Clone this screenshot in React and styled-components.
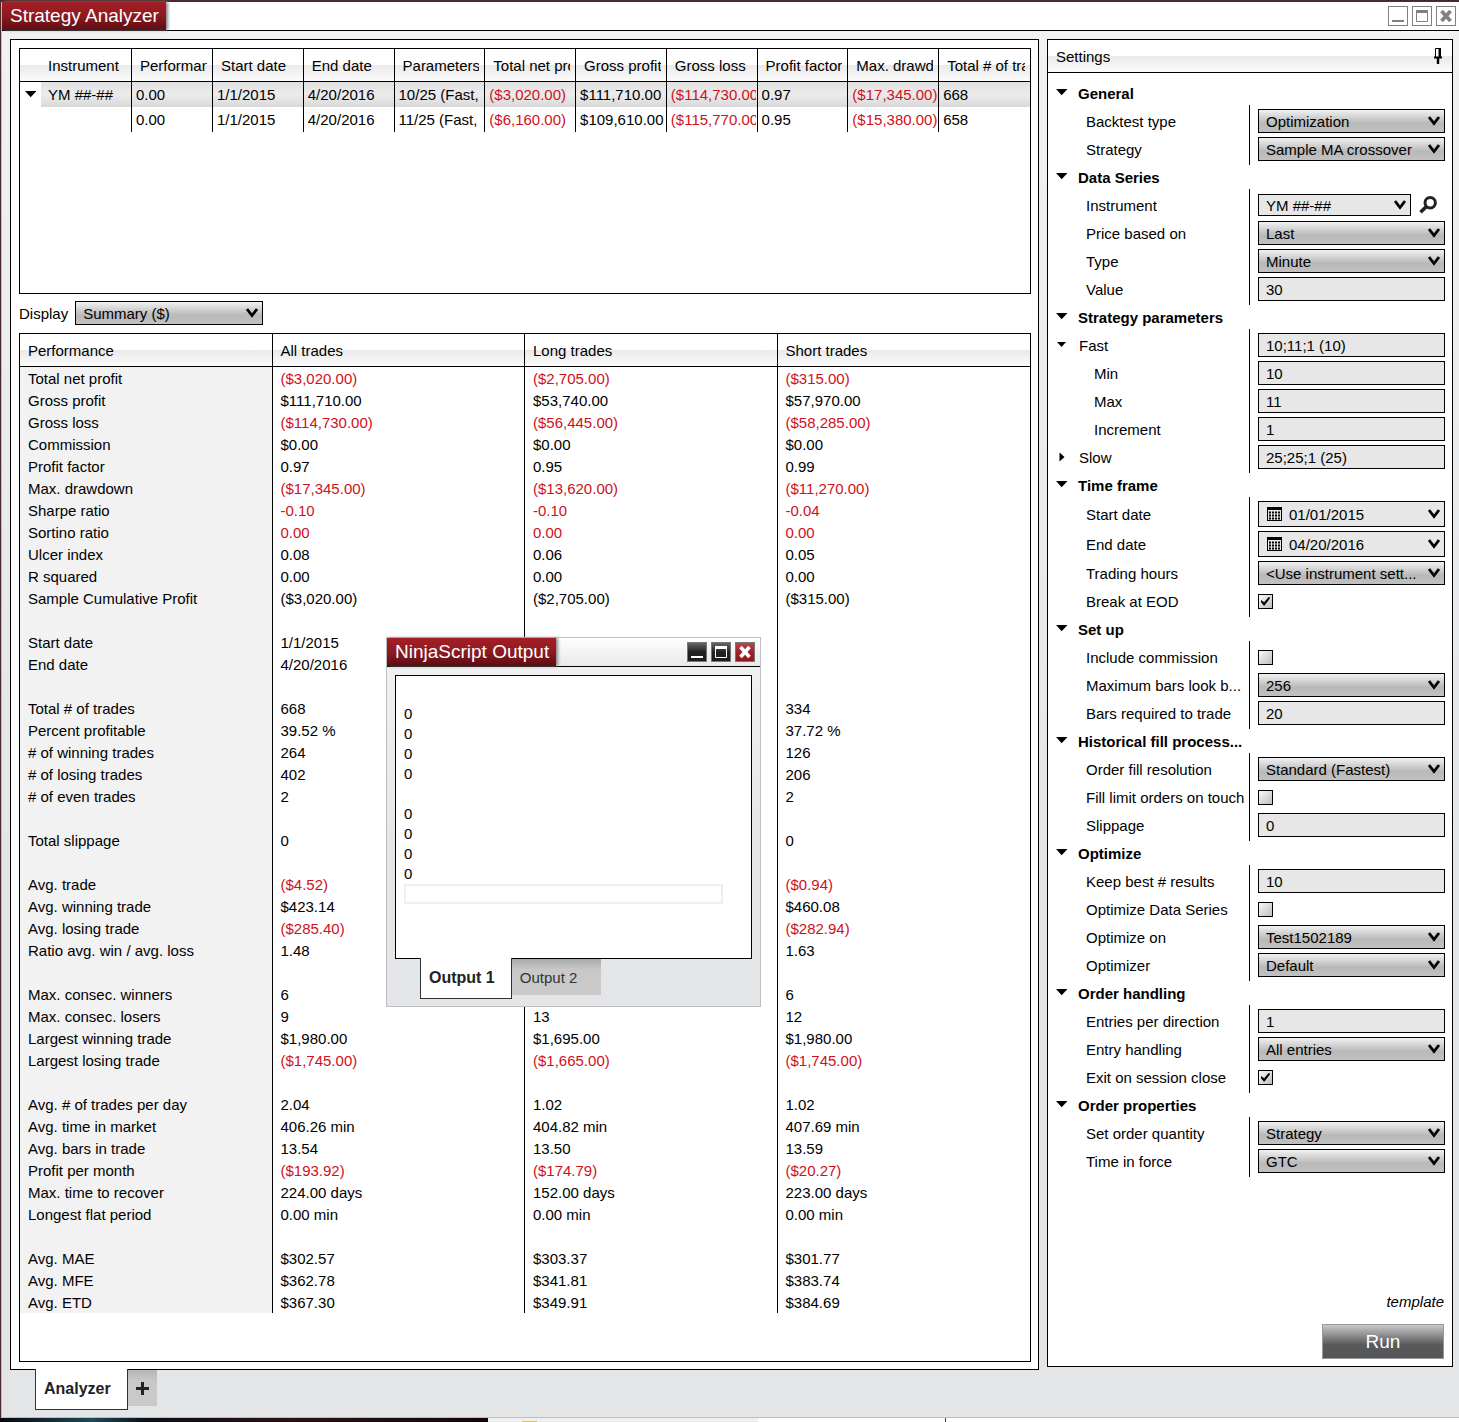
import React, { useId } from "react";
import styled, { createGlobalStyle, css } from "styled-components";

const Theme = {
  line: "#000",
  loss: "#d0101a",
  field: "#e7e7e7",
  header: "linear-gradient(#fff 50%, #e9e9eb 50%, #fbfbfb)",
  brand: "linear-gradient(#a61e26, #8c1a21 50%, #5c0d13)",
  button: "linear-gradient(#f1f1f1, #b9b9b9 60%, #c1c1c1)",
};

const runColumns = [
  "Instrument",
  "Performance",
  "Start date",
  "End date",
  "Parameters",
  "Total net profit",
  "Gross profit",
  "Gross loss",
  "Profit factor",
  "Max. drawdown",
  "Total # of trades",
];

const runs = [
  ["YM ##-##", "0.00", "1/1/2015", "4/20/2016", "10/25 (Fast,", "($3,020.00)", "$111,710.00", "($114,730.00)", "0.97", "($17,345.00)", "668"],
  ["", "0.00", "1/1/2015", "4/20/2016", "11/25 (Fast,", "($6,160.00)", "$109,610.00", "($115,770.00)", "0.95", "($15,380.00)", "658"],
];

const performance = [
  ["Total net profit", "($3,020.00)", "($2,705.00)", "($315.00)"],
  ["Gross profit", "$111,710.00", "$53,740.00", "$57,970.00"],
  ["Gross loss", "($114,730.00)", "($56,445.00)", "($58,285.00)"],
  ["Commission", "$0.00", "$0.00", "$0.00"],
  ["Profit factor", "0.97", "0.95", "0.99"],
  ["Max. drawdown", "($17,345.00)", "($13,620.00)", "($11,270.00)"],
  ["Sharpe ratio", "-0.10", "-0.10", "-0.04"],
  ["Sortino ratio", "0.00", "0.00", "0.00", "red"],
  ["Ulcer index", "0.08", "0.06", "0.05"],
  ["R squared", "0.00", "0.00", "0.00"],
  ["Sample Cumulative Profit", "($3,020.00)", "($2,705.00)", "($315.00)", "black"],
  [],
  ["Start date", "1/1/2015", "", ""],
  ["End date", "4/20/2016", "", ""],
  [],
  ["Total # of trades", "668", "", "334"],
  ["Percent profitable", "39.52 %", "", "37.72 %"],
  ["# of winning trades", "264", "", "126"],
  ["# of losing trades", "402", "", "206"],
  ["# of even trades", "2", "", "2"],
  [],
  ["Total slippage", "0", "", "0"],
  [],
  ["Avg. trade", "($4.52)", "", "($0.94)"],
  ["Avg. winning trade", "$423.14", "", "$460.08"],
  ["Avg. losing trade", "($285.40)", "", "($282.94)"],
  ["Ratio avg. win / avg. loss", "1.48", "", "1.63"],
  [],
  ["Max. consec. winners", "6", "", "6"],
  ["Max. consec. losers", "9", "13", "12"],
  ["Largest winning trade", "$1,980.00", "$1,695.00", "$1,980.00"],
  ["Largest losing trade", "($1,745.00)", "($1,665.00)", "($1,745.00)"],
  [],
  ["Avg. # of trades per day", "2.04", "1.02", "1.02"],
  ["Avg. time in market", "406.26 min", "404.82 min", "407.69 min"],
  ["Avg. bars in trade", "13.54", "13.50", "13.59"],
  ["Profit per month", "($193.92)", "($174.79)", "($20.27)"],
  ["Max. time to recover", "224.00 days", "152.00 days", "223.00 days"],
  ["Longest flat period", "0.00 min", "0.00 min", "0.00 min"],
  [],
  ["Avg. MAE", "$302.57", "$303.37", "$301.77"],
  ["Avg. MFE", "$362.78", "$341.81", "$383.74"],
  ["Avg. ETD", "$367.30", "$349.91", "$384.69"],
];

const settings = [
  {
    title: "General",
    rows: [
      { label: "Backtest type", kind: "select", value: "Optimization" },
      { label: "Strategy", kind: "select", value: "Sample MA crossover" },
    ],
  },
  {
    title: "Data Series",
    rows: [
      { label: "Instrument", kind: "instrument", value: "YM ##-##" },
      { label: "Price based on", kind: "select", value: "Last" },
      { label: "Type", kind: "select", value: "Minute" },
      { label: "Value", kind: "text", value: "30" },
    ],
  },
  {
    title: "Strategy parameters",
    rows: [
      { label: "Fast", kind: "text", value: "10;11;1 (10)", toggle: "open" },
      { label: "Min", kind: "text", value: "10", nested: true },
      { label: "Max", kind: "text", value: "11", nested: true },
      { label: "Increment", kind: "text", value: "1", nested: true },
      { label: "Slow", kind: "text", value: "25;25;1 (25)", toggle: "closed" },
    ],
  },
  {
    title: "Time frame",
    rows: [
      { label: "Start date", kind: "date", value: "01/01/2015" },
      { label: "End date", kind: "date", value: "04/20/2016" },
      { label: "Trading hours", kind: "select", value: "<Use instrument sett..." },
      { label: "Break at EOD", kind: "check", value: true },
    ],
  },
  {
    title: "Set up",
    rows: [
      { label: "Include commission", kind: "check", value: false },
      { label: "Maximum bars look b...", kind: "select", value: "256" },
      { label: "Bars required to trade", kind: "text", value: "20" },
    ],
  },
  {
    title: "Historical fill process...",
    rows: [
      { label: "Order fill resolution", kind: "select", value: "Standard (Fastest)" },
      { label: "Fill limit orders on touch", kind: "check", value: false },
      { label: "Slippage", kind: "text", value: "0" },
    ],
  },
  {
    title: "Optimize",
    rows: [
      { label: "Keep best # results", kind: "text", value: "10" },
      { label: "Optimize Data Series", kind: "check", value: false },
      { label: "Optimize on", kind: "select", value: "Test1502189" },
      { label: "Optimizer", kind: "select", value: "Default" },
    ],
  },
  {
    title: "Order handling",
    rows: [
      { label: "Entries per direction", kind: "text", value: "1" },
      { label: "Entry handling", kind: "select", value: "All entries" },
      { label: "Exit on session close", kind: "check", value: true },
    ],
  },
  {
    title: "Order properties",
    rows: [
      { label: "Set order quantity", kind: "select", value: "Strategy" },
      { label: "Time in force", kind: "select", value: "GTC" },
    ],
  },
];

const outputLines = ["", "0", "0", "0", "0", "", "0", "0", "0", "0"];

const isLoss = (text) => /^(\(|-)/.test(text || "");

const Triangle = ({ closed, small }) => {
  if (closed)
    return (
      <svg width="11" height="10" viewBox="0 0 11 10">
        <path d="M3.5 0.5 8.5 5 3.5 9.5z" />
      </svg>
    );
  return (
    <svg width="11" height="10" viewBox="0 0 11 10">
      <path d={small ? "M1 2h9L5.500 7z" : "M0 1h11.500L5.700 7.300z"} />
    </svg>
  );
};

const WindowIcon = ({ type, stroke }) => (
  <svg width="18" height="18" viewBox="0 0 18 18" fill="none" stroke={stroke}>
    {type === "min" && <path d="M3 14h12" strokeWidth="2" />}
    {type === "max" && (
      <>
        <path d="M3.500 3.500h11v11h-11z" />
        <path d="M3 4.500h12" strokeWidth="3" />
      </>
    )}
    {type === "close" && <path d="M4.500 4l9 10M13.500 4l-9 10" strokeWidth="3.600" />}
  </svg>
);

const Select = ({ id, value, $plain, $height, children, label }) => (
  <SelectBox>
    {children}
    <SelectInput
      id={id}
      aria-label={label}
      defaultValue={value}
      $plain={$plain}
      $height={$height}
      $icon={Boolean(children)}
    >
      <option>{value}</option>
    </SelectInput>
    <Chevron viewBox="0 0 12 10">
      <path d="M1 1 6 7.500 11 1" fill="none" stroke="#000" strokeWidth="2.800" />
    </Chevron>
  </SelectBox>
);

const Control = ({ id, row }) => {
  if (row.kind === "check")
    return <CheckBox id={id} type="checkbox" defaultChecked={row.value} />;
  if (row.kind === "text")
    return <TextInput id={id} type="text" defaultValue={row.value} />;
  if (row.kind === "date")
    return (
      <Select id={id} value={row.value} $plain $height={26}>
        <Calendar viewBox="0 0 15 14">
          <path d="M0 0h15v14H0z" />
          <path d="M1 3h13v10H1z" fill="#e7e7e7" />
          <path
            d="M2 5.500h11M2 8.500h11M2 11.500h11"
            stroke="#000"
            strokeWidth="2"
            strokeDasharray="2 1"
          />
        </Calendar>
      </Select>
    );
  if (row.kind === "instrument")
    return (
      <InstrumentBox>
        <Select id={id} value={row.value} $plain $height={22} />
        <SearchButton aria-label="Find instrument">
          <svg width="18" height="18" viewBox="0 0 18 18" fill="none" stroke="#222">
            <circle cx="11.200" cy="6.800" r="5.200" strokeWidth="3" />
            <path d="M7.200 10.800 1.500 16.300" strokeWidth="3.600" />
          </svg>
        </SearchButton>
      </InstrumentBox>
    );
  return <Select id={id} value={row.value} />;
};

const SettingRow = ({ row }) => {
  const id = useId();
  return (
    <Row $tall={row.kind === "date"}>
      <LabelCell $nested={row.nested} $toggle={Boolean(row.toggle)}>
        {row.toggle && (
          <ToggleButton aria-label={"Toggle " + row.label}>
            <Triangle closed={row.toggle === "closed"} small />
          </ToggleButton>
        )}
        <label htmlFor={id}>{row.label}</label>
      </LabelCell>
      <Control id={id} row={row} />
    </Row>
  );
};

const Settings = () => (
  <SettingsPanel>
    <SettingsHeader>
      Settings
      <PinButton aria-label="Pin">
        <svg width="8" height="16" viewBox="0 0 8 16">
          <path d="M1.500 0.500h5v9h-5z" fill="#fff" stroke="#000" />
          <path d="M4.500 0h2.500v9H4.500zM0 8.500h8v2H0zM2.800 10h2.400v6H2.800z" />
        </svg>
      </PinButton>
    </SettingsHeader>
    <SettingsBody>
      {settings.map((group) => (
        <section key={group.title}>
          <GroupTitle>
            <ToggleButton aria-label={"Toggle " + group.title}>
              <Triangle />
            </ToggleButton>
            {group.title}
          </GroupTitle>
          <Group>
            {group.rows.map((row) => (
              <SettingRow key={row.label} row={row} />
            ))}
          </Group>
        </section>
      ))}
    </SettingsBody>
    <SettingsFooter>
      <TemplateLink href="#template">template</TemplateLink>
      <RunButton>Run</RunButton>
    </SettingsFooter>
  </SettingsPanel>
);

const RunsTable = () => (
  <RunsBox>
    <Table>
      <colgroup>
        <Col $width="112px" />
        <Col $width="81px" />
      </colgroup>
      <thead>
        <tr>
          {runColumns.map((name, i) => (
            <HeadCell key={name} $first={i === 0}>
              <Clip>{name}</Clip>
            </HeadCell>
          ))}
        </tr>
      </thead>
      <tbody>
        {runs.map((run, r) => (
          <RunRow key={r} $selected={r === 0}>
            {run.map((text, i) =>
              i === 0 ? (
                <InstrumentCell key={i}>
                  <InstrumentName>
                    <Expander>
                      {r === 0 && (
                        <ToggleButton aria-label="Toggle runs">
                          <Triangle />
                        </ToggleButton>
                      )}
                    </Expander>
                    {text}
                  </InstrumentName>
                </InstrumentCell>
              ) : (
                <RunCell key={i} $loss={isLoss(text)}>
                  <Clip>{text}</Clip>
                </RunCell>
              )
            )}
          </RunRow>
        ))}
      </tbody>
    </Table>
  </RunsBox>
);

const PerformanceTable = () => (
  <PerformanceBox>
    <Table>
      <thead>
        <tr>
          {["Performance", "All trades", "Long trades", "Short trades"].map((name) => (
            <HeadCell key={name}>{name}</HeadCell>
          ))}
        </tr>
      </thead>
      <tbody>
        {performance.map(([name, all, long, short, tone], i) => (
          <tr key={i}>
            <MetricName scope="row">{name}</MetricName>
            {[all, long, short].map((text, c) => (
              <MetricCell key={c} $loss={tone ? tone === "red" : isLoss(text)}>
                {text}
              </MetricCell>
            ))}
          </tr>
        ))}
      </tbody>
    </Table>
  </PerformanceBox>
);

const OutputWindow = () => (
  <OutputFrame>
    <OutputTitleBar>
      <Title>NinjaScript Output</Title>
      <WindowButtons $inset>
        <DarkButton aria-label="Minimize output">
          <WindowIcon type="min" stroke="#fff" />
        </DarkButton>
        <DarkButton aria-label="Maximize output">
          <WindowIcon type="max" stroke="#fff" />
        </DarkButton>
        <DarkButton aria-label="Close output" $red>
          <WindowIcon type="close" stroke="#fff" />
        </DarkButton>
      </WindowButtons>
    </OutputTitleBar>
    <OutputBody>
      <OutputPage>
        {outputLines.map((line, i) => (
          <OutputLine key={i}>{line}</OutputLine>
        ))}
        <OutputInput type="text" aria-label="Output line" />
      </OutputPage>
      <Tabs>
        <ActiveTab>Output 1</ActiveTab>
        <Tab>Output 2</Tab>
      </Tabs>
    </OutputBody>
  </OutputFrame>
);

export default function App() {
  return (
    <Desktop>
      <GlobalStyle />
      <MainWindow>
        <TitleBar>
          <Title>Strategy Analyzer</Title>
          <WindowButtons>
            <LightButton aria-label="Minimize">
              <WindowIcon type="min" stroke="#808080" />
            </LightButton>
            <LightButton aria-label="Maximize">
              <WindowIcon type="max" stroke="#808080" />
            </LightButton>
            <LightButton aria-label="Close">
              <WindowIcon type="close" stroke="#808080" />
            </LightButton>
          </WindowButtons>
        </TitleBar>
        <Workspace>
          <ResultsColumn>
            <ResultsPanel>
              <RunsTable />
              <DisplayRow>
                <label htmlFor="display">Display</label>
                <DisplaySelect>
                  <Select id="display" value="Summary ($)" />
                </DisplaySelect>
              </DisplayRow>
              <PerformanceTable />
            </ResultsPanel>
            <Tabs>
              <ActiveTab>Analyzer</ActiveTab>
              <AddTab aria-label="Add tab">
                <svg width="13" height="13" viewBox="0 0 13 13">
                  <path d="M6.500 0v13M0 6.500h13" stroke="#222" strokeWidth="3" />
                </svg>
              </AddTab>
            </Tabs>
          </ResultsColumn>
          <Settings />
        </Workspace>
      </MainWindow>
      <DesktopStrip>
        <StripPhoto />
        <StripBar>
          <StripMark />
        </StripBar>
        <StripPage />
      </DesktopStrip>
      <OutputWindow />
    </Desktop>
  );
}

const GlobalStyle = createGlobalStyle`
  * {
    box-sizing: border-box;
  }

  body {
    margin: 0;
    color: #000;
    font-family: "Liberation Sans", Arial, sans-serif;
    font-size: 15px;
  }

  button,
  input,
  select {
    margin: 0;
    color: inherit;
    font: inherit;
  }

  svg {
    display: block;
  }
`;

const Desktop = styled.div`
  position: relative;
  display: flex;
  flex-direction: column;
  min-height: 100vh;
  padding: 2px 0 0 1px;
  background: #4a2a2c;
`;

const MainWindow = styled.div`
  flex: 1;
  display: flex;
  flex-direction: column;
  border: 1px solid #bcbec2;
  border-width: 0 0 1px 1px;
  background: linear-gradient(#f2f2f2, #e4e5e7 60%);
`;

const TitleBar = styled.header`
  display: flex;
  justify-content: space-between;
  align-items: stretch;
  height: 29px;
  border-bottom: 1px solid ${Theme.line};
  background: #fff;
`;

const Title = styled.h1`
  margin: 0;
  padding: 0 7px 0 8px;
  background: ${Theme.brand};
  box-shadow: 2px 0 3px #888;
  color: #fff;
  font-size: 19px;
  font-weight: normal;
  line-height: 28px;
  white-space: nowrap;
`;

const WindowButtons = styled.div`
  display: flex;
  align-items: center;
  gap: 4px;
  padding-right: ${(props) => (props.$inset ? "5px" : "3px")};
`;

const LightButton = styled.button`
  width: 20px;
  height: 20px;
  padding: 0;
  border: 1px solid #808080;
  background: #fff;
`;

const DarkButton = styled.button`
  width: 20px;
  height: 20px;
  padding: 0;
  border: 1px solid #777;
  background: ${(props) =>
    props.$red
      ? "linear-gradient(#b5484e, #a51f28 50%, #8e1820)"
      : "linear-gradient(#666, #222 50%, #1c1c1c)"};
`;

const Workspace = styled.main`
  flex: 1;
  display: grid;
  grid-template-columns: minmax(0, 1fr) 406px;
  gap: 8px;
  padding: 8px 6px 7px 8px;
`;

const ResultsColumn = styled.div`
  display: flex;
  flex-direction: column;
`;

const ResultsPanel = styled.div`
  flex: 1;
  display: flex;
  flex-direction: column;
  padding: 8px 7px 7px 8px;
  border: 1px solid ${Theme.line};
  background: #fff;
`;

const RunsBox = styled.div`
  min-height: 246px;
  border: 1px solid ${Theme.line};
`;

const PerformanceBox = styled.div`
  flex: 1;
  border: 1px solid ${Theme.line};
`;

const Table = styled.table`
  width: 100%;
  table-layout: fixed;
  border-spacing: 0;
  white-space: nowrap;
`;

const Col = styled.col`
  width: ${(props) => props.$width};
`;

const HeadCell = styled.th`
  height: 33px;
  padding: 0 5px 0 ${(props) => (props.$first ? "28px" : "8px")};
  border-right: 1px solid ${Theme.line};
  border-bottom: 1px solid ${Theme.line};
  background: ${Theme.header};
  font-weight: normal;
  text-align: left;

  &:last-child {
    border-right: 0;
  }
`;

const Clip = styled.span`
  display: block;
  overflow: hidden;
`;

const RunCell = styled.td`
  height: 25px;
  padding: 0 1px 0 4px;
  border-right: 1px solid ${Theme.line};
  color: ${(props) => (props.$loss ? Theme.loss : "inherit")};

  &:last-child {
    border-right: 0;
  }
`;

const InstrumentCell = styled.td`
  height: 25px;
  padding: 0;
  border-right: 1px solid ${Theme.line};
`;

const InstrumentName = styled.div`
  display: flex;
  align-items: center;
  gap: 7px;
  height: 25px;
`;

const Expander = styled.span`
  display: flex;
  align-items: center;
  justify-content: center;
  width: 21px;
  height: 25px;
  background: #fff;
`;

const RunRow = styled.tr`
  ${(props) =>
    props.$selected &&
    css`
      background: linear-gradient(#e0e0e0, #ececec 50%, #d8d8d8);
    `}
`;

const MetricName = styled.th`
  height: 22px;
  padding: 0 8px;
  border-right: 1px solid ${Theme.line};
  background: #f2f2f2;
  font-weight: normal;
  text-align: left;
`;

const MetricCell = styled.td`
  height: 22px;
  padding: 0 8px;
  border-right: 1px solid ${Theme.line};
  color: ${(props) => (props.$loss ? Theme.loss : "inherit")};

  &:last-child {
    border-right: 0;
  }
`;

const DisplayRow = styled.div`
  display: flex;
  align-items: center;
  gap: 7px;
  padding: 7px 0 8px;
`;

const DisplaySelect = styled.div`
  width: 188px;
`;

const Tabs = styled.div`
  display: flex;
  align-items: flex-start;
  margin: -1px 0 0 25px;
`;

const ActiveTab = styled.button`
  height: 41px;
  padding: 0 16px 0 8px;
  border: 1px solid #333;
  border-top: 0;
  background: #fff;
  color: #222;
  font-size: 16px;
  font-weight: bold;
`;

const Tab = styled.button`
  height: 36px;
  margin-top: 1px;
  padding: 0 24px 0 8px;
  border: 0;
  background: linear-gradient(#a9a9a9, #c8c8c8 30%, #cacaca);
  color: #333;
`;

const AddTab = styled.button`
  height: 36px;
  margin-top: 1px;
  padding: 0 8px;
  border: 0;
  background: linear-gradient(#b4b4b4, #c8c8c8 30%, #cacaca);
`;

const SettingsPanel = styled.aside`
  display: flex;
  flex-direction: column;
  margin-bottom: 43px;
  border: 1px solid ${Theme.line};
  background: #fff;
`;

const SettingsHeader = styled.div`
  display: flex;
  align-items: center;
  justify-content: space-between;
  height: 33px;
  padding: 0 10px 0 8px;
  border-bottom: 1px solid ${Theme.line};
  background: ${Theme.header};
`;

const PinButton = styled.button`
  padding: 0;
  border: 0;
  background: none;
`;

const SettingsBody = styled.div`
  padding: 8px 7px 0 0;
`;

const GroupTitle = styled.h2`
  display: flex;
  align-items: center;
  gap: 11px;
  height: 24px;
  margin: 0;
  padding-left: 8px;
  font-size: 15px;
`;

/* the rule between labels and controls runs the full height of a group */
const Group = styled.div`
  padding: 2px 0;
  background: linear-gradient(#000, #000) 201px 0 / 1px 100% no-repeat;
`;

const Row = styled.div`
  display: grid;
  grid-template-columns: 202px minmax(0, 1fr);
  gap: 8px;
  align-items: center;
  height: ${(props) => (props.$tall ? "30px" : "28px")};
`;

const LabelCell = styled.div`
  display: flex;
  align-items: center;
  gap: 12px;
  padding-left: ${(props) => (props.$toggle ? "8px" : props.$nested ? "46px" : "38px")};
  white-space: nowrap;
`;

const ToggleButton = styled.button`
  padding: 0;
  border: 0;
  background: none;
`;

const SelectBox = styled.div`
  position: relative;
`;

const SelectInput = styled.select`
  display: block;
  width: 100%;
  height: ${(props) => props.$height || 24}px;
  padding: 0 20px 0 ${(props) => (props.$icon ? "30px" : "7px")};
  appearance: none;
  border: 1px solid ${Theme.line};
  border-radius: 0;
  background: ${(props) => (props.$plain ? Theme.field : Theme.button)};
`;

const Chevron = styled.svg`
  position: absolute;
  top: calc(50% - 5px);
  right: 5px;
  width: 12px;
  height: 10px;
  pointer-events: none;
`;

const Calendar = styled.svg`
  position: absolute;
  top: calc(50% - 7px);
  left: 9px;
  width: 15px;
  height: 14px;
  pointer-events: none;
`;

const InstrumentBox = styled.div`
  display: grid;
  grid-template-columns: minmax(0, 1fr) 34px;
  align-items: center;
`;

const SearchButton = styled.button`
  padding: 0 8px;
  border: 0;
  background: none;
`;

const TextInput = styled.input`
  width: 100%;
  height: 24px;
  padding: 0 7px;
  border: 1px solid ${Theme.line};
  background: ${Theme.field};
`;

const CheckBox = styled.input`
  display: grid;
  place-items: center;
  width: 15px;
  height: 15px;
  appearance: none;
  border: 1px solid ${Theme.line};
  background: linear-gradient(135deg, #fafafa, #bdbdbd);

  &:checked::before {
    content: "";
    width: 9px;
    height: 9px;
    background: #000;
    clip-path: polygon(0 40%, 35% 65%, 90% 0, 100% 20%, 40% 100%, 30% 100%, 0 65%);
  }
`;

const SettingsFooter = styled.div`
  display: flex;
  flex-direction: column;
  align-items: flex-end;
  gap: 14px;
  margin-top: auto;
  padding: 16px 8px 7px;
`;

const TemplateLink = styled.a`
  color: inherit;
  font-style: italic;
  text-decoration: none;
`;

const RunButton = styled.button`
  width: 122px;
  height: 35px;
  padding: 0;
  border: 1px solid #999;
  background: linear-gradient(#c9c9c9, #58595b 60%, #545557);
  color: #fff;
  font-size: 19px;
`;

const OutputFrame = styled.section`
  position: absolute;
  top: 637px;
  left: 386px;
  width: 375px;
  border: 1px solid #bcbec2;
  background: linear-gradient(#f2f2f2, #e4e5e7 60%);
`;

const OutputTitleBar = styled(TitleBar)`
  background: linear-gradient(#fff, #e9e9eb);
`;

const OutputBody = styled.div`
  padding: 8px 8px 7px;
`;

const OutputPage = styled.div`
  height: 284px;
  padding: 8px;
  border: 1px solid ${Theme.line};
  background: #fff;
`;

const OutputLine = styled.div`
  height: 20px;
  line-height: 20px;
`;

const OutputInput = styled.input`
  display: block;
  width: 319px;
  height: 20px;
  border: 2px solid #efefef;
`;

const DesktopStrip = styled.div`
  display: flex;
  height: 4px;
  margin-left: -1px;
`;

const StripPhoto = styled.div`
  width: 488px;
  background: linear-gradient(90deg, #06080e, #14313a 12%, #1c4a58 19%, #0b0d16 30%, #2a1216 60%, #12060a);
`;

const StripBar = styled.div`
  width: 270px;
  padding: 3px 0 0 34px;
  background: #f0f0f0;
`;

const StripMark = styled.div`
  width: 15px;
  height: 1px;
  background: #d8c46a;
`;

const StripPage = styled.div`
  flex: 1;
  background: linear-gradient(#b01a22, #b01a22) 187px 0 / 1px 100% no-repeat #fff;
`;
